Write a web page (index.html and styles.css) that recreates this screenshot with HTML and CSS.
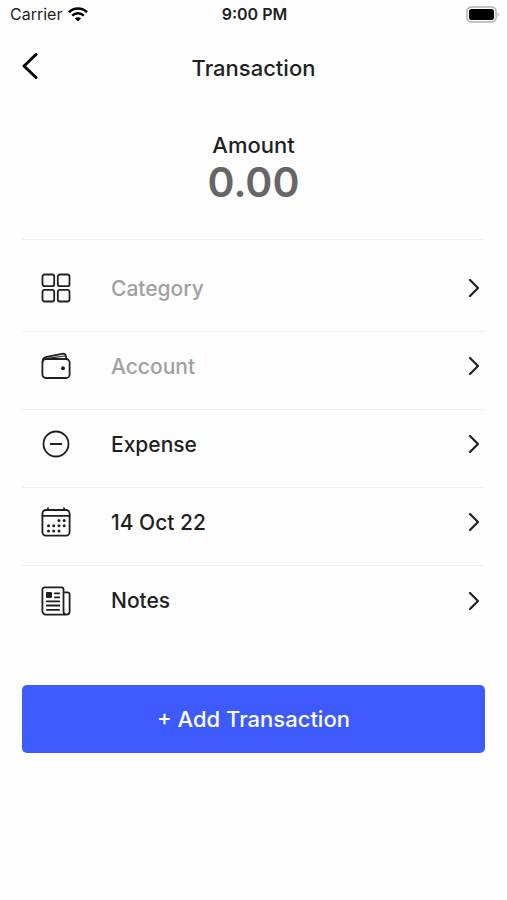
FILE: index.html
```html
<!DOCTYPE html>
<html lang="en">
<head>
    <meta charset="UTF-8">
    <meta name="viewport" content="width=device-width, initial-scale=1.0">
    <title>Transaction</title>
    <link rel="stylesheet" href="styles.css">
</head>
<body>

<div class="status-bar">
    <div class="carrier">
        <span>Carrier</span>
        <svg width="20" height="15" viewBox="0 0 20 15" fill="none" stroke="#000" stroke-width="2.6">
            <path d="M1 5.2C6 .3 14 .3 19 5.2"/>
            <path d="M4.2 8.6c3.3-3.1 8.3-3.1 11.6 0"/>
            <path d="M10 14.6 6.9 11.5c1.8-1.6 4.4-1.6 6.2 0z" fill="#000" stroke="none"/>
        </svg>
    </div>
    <div class="time">9:00 PM</div>
    <div class="battery">
        <svg width="33" height="17" viewBox="0 0 33 17">
            <rect x="1" y="1" width="29" height="15" rx="4.5" fill="none" stroke="#b0b0b0" stroke-width="1.5"/>
            <rect x="3" y="3" width="25" height="11" rx="2.5" fill="#000"/>
            <path d="M31.5 6v5c1.6-.8 1.6-4.2 0-5z" fill="#b0b0b0"/>
        </svg>
    </div>
</div>

<header class="header">
    <button class="back" type="button" aria-label="Back">
        <svg width="16" height="28" viewBox="0 0 16 28" fill="none" stroke="#000" stroke-width="3" stroke-linecap="round" stroke-linejoin="round">
            <path d="M14 2.500 2 14l12 11.500"/>
        </svg>
    </button>
    <h1>Transaction</h1>
</header>

<form class="transaction">
    <div class="amount">
        <label for="amount">Amount</label>
        <input type="text" id="amount" inputmode="decimal" placeholder="0.00">
    </div>

    <div class="options">
        <button class="option empty" type="button">
            <svg class="icon" viewBox="0 0 30 30">
                <rect x="1.500" y="1.500" width="11.700" height="11.700" rx="2"/>
                <rect x="16.800" y="1.500" width="11.700" height="11.700" rx="2"/>
                <rect x="1.500" y="16.800" width="11.700" height="11.700" rx="2"/>
                <rect x="16.800" y="16.800" width="11.700" height="11.700" rx="2"/>
            </svg>
            <span>Category</span>
            <svg class="chevron" viewBox="0 0 12 20"><path d="m2 2 8 8-8 8"/></svg>
        </button>
        <button class="option empty" type="button">
            <svg class="icon" viewBox="0 0 30 30">
                <rect x="1.400" y="8" width="27.200" height="19" rx="3.500"/>
                <path d="M1.600 10.500c0-3 1.200-4.200 4-4.700L21 2.800c2.200-.4 3.600.5 3.900 2.400l.5 2.800"/>
                <path d="M3 7.800 23.500 5" stroke-width="1.200"/>
                <circle class="solid" cx="22" cy="17.300" r="2"/>
            </svg>
            <span>Account</span>
            <svg class="chevron" viewBox="0 0 12 20"><path d="m2 2 8 8-8 8"/></svg>
        </button>
        <button class="option" type="button">
            <svg class="icon" viewBox="0 0 30 30">
                <circle cx="15" cy="15" r="12.500"/>
                <path d="M9.700 15h10.600"/>
            </svg>
            <span>Expense</span>
            <svg class="chevron" viewBox="0 0 12 20"><path d="m2 2 8 8-8 8"/></svg>
        </button>
        <button class="option" type="button">
            <svg class="icon" viewBox="0 0 30 30">
                <rect x="1.400" y="3" width="27.200" height="25.600" rx="3.500"/>
                <path d="M1.400 8.800h27.200M7 1.200v2M23 1.200v2"/>
                <g class="solid">
                    <circle cx="18" cy="13.500" r="1.500"/>
                    <circle cx="23.200" cy="13.500" r="1.500"/>
                    <circle cx="7.500" cy="18.700" r="1.500"/>
                    <circle cx="12.700" cy="18.700" r="1.500"/>
                    <circle cx="18" cy="18.700" r="1.500"/>
                    <circle cx="23.200" cy="18.700" r="1.500"/>
                    <circle cx="7.500" cy="23.900" r="1.500"/>
                    <circle cx="12.700" cy="23.900" r="1.500"/>
                    <circle cx="18" cy="23.900" r="1.500"/>
                </g>
            </svg>
            <span>14 Oct 22</span>
            <svg class="chevron" viewBox="0 0 12 20"><path d="m2 2 8 8-8 8"/></svg>
        </button>
        <button class="option" type="button">
            <svg class="icon" viewBox="0 0 30 30">
                <path d="M25.500 28.600H4.700a3.300 3.300 0 0 1-3.300-3.300V3.600c0-1.300.9-2.200 2.200-2.200h16.700c1.300 0 2.200.9 2.200 2.200v22c0 1.700 1.300 3 3 3s3.100-1.300 3.100-3V8.500c0-1.300-.9-2.200-2.200-2.200h-3.900"/>
                <path d="M13.800 7.300h4.500M13.800 11.300h4.500M5.800 15.300h12.500M5.800 19.500h12.500M5.800 23.800h12.500"/>
                <rect class="solid" x="5" y="6" width="6" height="6" rx="1"/>
            </svg>
            <span>Notes</span>
            <svg class="chevron" viewBox="0 0 12 20"><path d="m2 2 8 8-8 8"/></svg>
        </button>
    </div>

    <button class="add" type="submit">+ Add Transaction</button>
</form>

</body>
</html>
```
FILE: styles.css
```css
* {
    box-sizing: border-box;
}

body {
    font-family: Inter, 'Liberation Sans', sans-serif;
    margin: 0;
    background-color: #fefefe;
    color: #1f1f1f;
}

button,
input {
    font-family: inherit;
    padding: 0;
    border: none;
    background: none;
    color: inherit;
}

button {
    cursor: pointer;
}

svg {
    display: block;
}

.status-bar {
    display: grid;
    grid-template-columns: 1fr auto 1fr;
    align-items: center;
    height: 28px;
    padding: 0 8px 0 10px;
    font-size: 16px;
}

.carrier {
    display: flex;
    align-items: center;
    gap: 6px;
}

.time {
    font-weight: 600;
}

.battery {
    justify-self: end;
}

.header {
    display: grid;
    grid-template-columns: 1fr auto 1fr;
    align-items: center;
    height: 80px;
    padding: 0 22px;
}

.header h1 {
    margin: 0;
    font-size: 22px;
    font-weight: 500;
}

.back {
    justify-self: start;
    margin-bottom: 4px;
}

.transaction {
    padding: 0 22px;
}

.amount {
    display: flex;
    flex-direction: column;
    align-items: center;
    padding: 23px 0 35px;
    border-bottom: 1px solid #f0f0f0;
}

.amount label {
    font-size: 22px;
    line-height: 28px;
    font-weight: 500;
}

.amount input {
    width: 100%;
    height: 45px;
    font-size: 41px;
    font-weight: 600;
    text-align: center;
}

.amount input::placeholder {
    color: #666;
    opacity: 1;
}

.options {
    padding-top: 14px;
}

.option {
    display: flex;
    align-items: center;
    width: 100%;
    height: 78px;
    padding: 0 5px 9px 19px;
    border-bottom: 1px solid #f0f0f0;
    font-size: 21px;
    font-weight: 500;
    text-align: left;
}

.option:last-child {
    border-bottom: none;
}

.option span {
    flex: 1;
    margin-left: 40px;
}

.option.empty span {
    color: #a0a0a0;
}

.icon {
    width: 30px;
    height: 30px;
    fill: none;
    stroke: #1f1f1f;
    stroke-width: 1.8;
    stroke-linecap: round;
    stroke-linejoin: round;
}

.icon .solid {
    fill: #1f1f1f;
    stroke: none;
}

.chevron {
    width: 12px;
    height: 20px;
    fill: none;
    stroke: #1f1f1f;
    stroke-width: 2.2;
    stroke-linecap: round;
    stroke-linejoin: round;
}

.add {
    width: 100%;
    height: 68px;
    margin-top: 41px;
    border-radius: 5px;
    background-color: #3d5afe;
    color: white;
    font-size: 22px;
    font-weight: 500;
}
```
